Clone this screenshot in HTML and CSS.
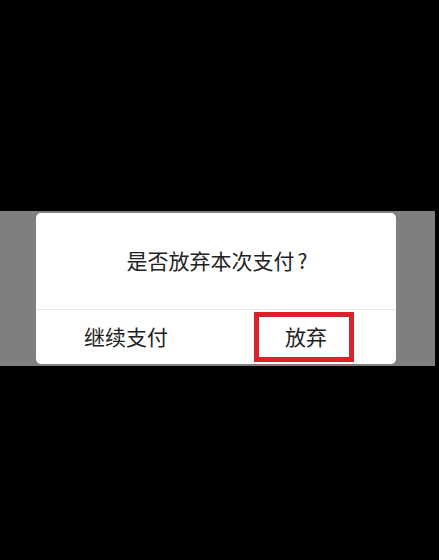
FILE: index.html
```html
<!DOCTYPE html>
<html lang="zh-CN">
<head>
<meta charset="utf-8">
<link rel="stylesheet" href="styles.css">
</head>
<body>
<div class="screen">
  <div class="band">
    <div class="dialog">
      <div class="title">是否放弃本次支付<span class="qmark">?</span></div>
      <div class="actions">
        <div class="btn">继续支付</div>
        <div class="btn btn-mark">放弃<span class="highlight"></span></div>
      </div>
    </div>
  </div>
</div>
</body>
</html>
```
FILE: styles.css
```css
html, body {
  margin: 0;
  padding: 0;
  background: #000;
}
.screen {
  width: 439px;
  height: 560px;
  background: #000;
  padding-top: 211px;
  box-sizing: border-box;
}
.band {
  width: 435px;
  height: 155px;
  background: #7f7f7f;
  padding: 2px 0 0 36px;
  box-sizing: border-box;
}
.dialog {
  width: 360px;
  height: 151px;
  background: #fff;
  border-radius: 5px;
  display: flex;
  flex-direction: column;
  font-family: "Noto Sans CJK SC", "Noto Sans", sans-serif;
  color: #222;
}
.title {
  height: 97px;
  display: flex;
  align-items: center;
  justify-content: center;
  font-size: 21px;
  padding-bottom: 2px;
  padding-left: 2px;
  box-sizing: border-box;
  border-bottom: 1px solid #e6e6e6;
}
.qmark {
  margin-left: 3px;
}
.actions {
  flex: 1;
  display: flex;
}
.btn {
  flex: 1;
  display: flex;
  align-items: center;
  justify-content: center;
  font-size: 21px;
  position: relative;
  padding-bottom: 2px;
  box-sizing: border-box;
}
.highlight {
  position: absolute;
  left: 38px;
  top: 2px;
  width: 100px;
  height: 50px;
  border: 5px solid #d8232a;
  box-sizing: border-box;
}
```
